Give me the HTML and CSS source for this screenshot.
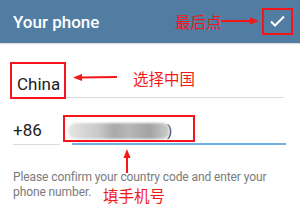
FILE: index.html
```html
<!DOCTYPE html>
<html>
<head>
<meta charset="utf-8">
<link rel="stylesheet" href="styles.css">
</head>
<body>
<div class="page">
  <header class="bar">
    <h1 class="title">Your phone</h1>
    <button class="done" aria-label="Done">
      <svg width="18" height="14" viewBox="0 0 18 14"><polyline points="2,6.5 6,10.5 15,1.5" fill="none" stroke="#fff" stroke-width="2"/></svg>
    </button>
  </header>
  <main class="form">
    <div class="field country">China</div>
    <div class="phone-row">
      <div class="field code">+86</div>
      <div class="field number">
        <span class="blur"></span><span class="paren">)</span>
      </div>
    </div>
    <p class="help">Please confirm your country code and enter your phone number.</p>
  </main>

  <div class="mark mark-done"></div>
  <div class="mark mark-country"></div>
  <div class="mark mark-number"></div>
  <span class="note note-done">最后点</span>
  <span class="note note-country">选择中国</span>
  <span class="note note-number">填手机号</span>
  <svg class="arrows" width="300" height="210" viewBox="0 0 300 210">
    <line x1="221" y1="21" x2="252" y2="21" stroke="#f21818" stroke-width="2"/>
    <polygon points="259,21 250,17.5 250,24.5" fill="#f21818"/>
    <line x1="80" y1="77.5" x2="117" y2="77" stroke="#f21818" stroke-width="2"/>
    <polygon points="73,77.5 82,74 82,81" fill="#f21818"/>
    <line x1="127" y1="157" x2="127" y2="173" stroke="#f21818" stroke-width="2"/>
    <polygon points="127,149 123.5,158 130.5,158" fill="#f21818"/>
  </svg>
</div>
</body>
</html>
```
FILE: styles.css
```css
* { box-sizing: border-box; }
html, body { margin: 0; padding: 0; background: #fff; }
body { font-family: Roboto, "Noto Sans", sans-serif; width: 300px; height: 210px; overflow: hidden; }
.page { position: relative; width: 300px; height: 210px; }

.bar {
  height: 43px;
  background: #527da3;
  display: flex;
  align-items: center;
  justify-content: space-between;
  padding: 0 9px 0 13px;
  box-shadow: 0 1px 1px rgba(0,0,0,0.12);
}
.title { margin: 0; color: #fff; font-size: 17px; font-weight: 500; line-height: 20px; }
.done { border: 0; background: none; padding: 0; width: 26px; height: 24px; display: flex; align-items: center; justify-content: center; }

.form { padding: 31px 14px 0 13px; }
.field { font-size: 17px; line-height: 20px; color: #212121; padding-bottom: 3px; border-bottom: 1px solid #dcdcdc; }
.country { padding-left: 4px; width: 271px; }
.phone-row { display: flex; gap: 12px; margin-top: 22px; }
.code { width: 47px; }
.number { flex: 1; border-bottom: 2px solid #6cb2e4; padding-bottom: 2px; display: flex; align-items: center; height: 25px; }
.blur {
  display: block;
  margin-left: -4px;
  width: 102px;
  height: 16px;
  border-radius: 8px;
  background: linear-gradient(90deg, #e6e6e6 0, #d6d6d6 15%, #c9c9c9 30%, #a9a9a9 45%, #b8b8b8 60%, #a3a3a3 80%, #d0d0d0 100%);
  filter: blur(1px);
}
.paren { font-size: 15px; color: #333; margin-left: -3px; line-height: 16px; }

.help { margin: 25px 0 0; font-size: 12px; letter-spacing: -0.1px; line-height: 15px; color: #7a7a7a; }

.mark { position: absolute; border: 2px solid #f5151a; }
.mark-done { left: 262px; top: 8px; width: 31px; height: 27px; }
.mark-country { left: 10px; top: 62px; width: 56px; height: 37px; }
.mark-number { left: 63px; top: 115px; width: 132px; height: 27px; }

.note { position: absolute; color: #f21818; font-family: "Noto Sans CJK SC", sans-serif; font-size: 15.5px; line-height: 18px; }
.note-done { left: 175px; top: 12px; }
.note-country { left: 133px; top: 69px; }
.note-number { left: 103px; top: 186px; }

.arrows { position: absolute; left: 0; top: 0; pointer-events: none; }
```
